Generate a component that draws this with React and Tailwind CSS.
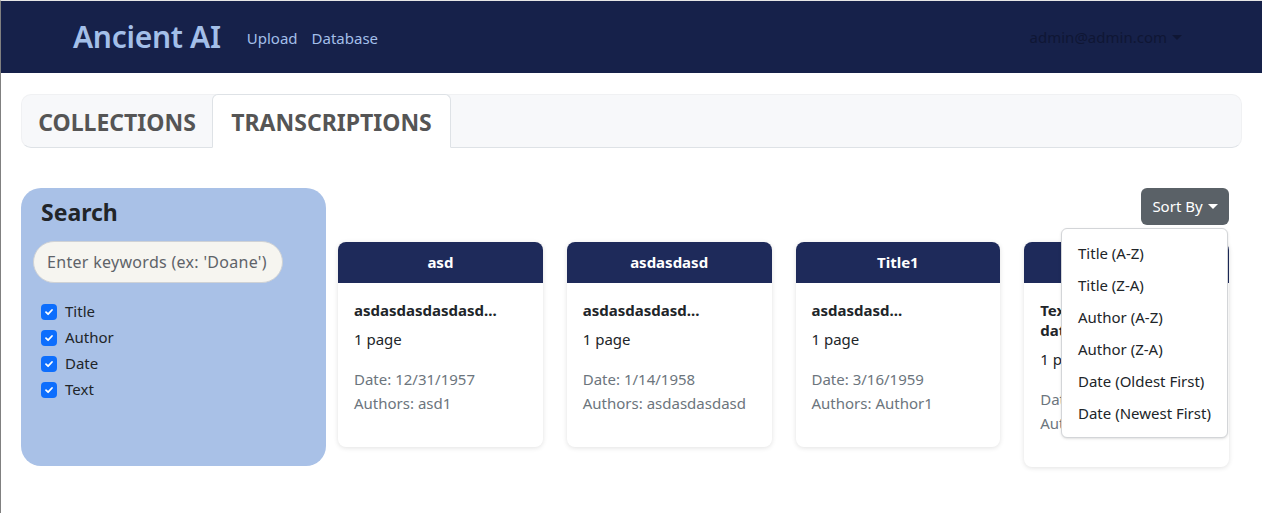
import React from "react";

const CARDS = [
  { head: "asd", title: "asdasdasdasdasd...", date: "12/31/1957", authors: "asd1" },
  { head: "asdasdasd", title: "asdasdasdasd...", date: "1/14/1958", authors: "asdasdasdasd" },
  { head: "Title1", title: "asdasdasd...", date: "3/16/1959", authors: "Author1" },
  { head: "Text", title: "Text transcription dataset...", date: "2/2/1960", authors: "Author2" },
];

const SORTS = [
  "Title (A-Z)",
  "Title (Z-A)",
  "Author (A-Z)",
  "Author (Z-A)",
  "Date (Oldest First)",
  "Date (Newest First)",
];

const Check = () => (
  <span className="w-4 h-4 rounded-[4px] bg-[#0d6efd] flex items-center justify-center">
    <svg width="10" height="10" viewBox="0 0 10 10" fill="none">
      <path d="M2 5.2 L4.1 7.2 L8 3" stroke="white" strokeWidth="1.8" strokeLinecap="round" strokeLinejoin="round" />
    </svg>
  </span>
);

const Caret = ({ color }) => (
  <span className={`inline-block ml-[5px] align-middle w-0 h-0 border-l-[5px] border-r-[5px] border-t-[5px] border-l-transparent border-r-transparent ${color}`} />
);

export default function App() {
  return (
    <div className="min-h-[513px] bg-white border-l border-[#808080] border-t border-t-[#e6e6e6] text-[#212529]" style={{ fontFamily: '"Noto Sans", "Open Sans", sans-serif' }}>
      {/* Navbar */}
      <nav className="h-[72px] bg-[#16214a] flex items-center pl-[72px] pr-[80px]">
        <span className="text-[30px] font-semibold text-[#a3bfe9] tracking-[-0.3px] leading-none">Ancient AI</span>
        <div className="flex gap-[14px] ml-[26px] mt-[2px] text-[15px] text-[#a3bfe9]">
          <span>Upload</span>
          <span>Database</span>
        </div>
        <div className="ml-auto mt-px text-[15px] text-[#0f1634] flex items-center">
          admin@admin.com
          <Caret color="border-t-[#0f1634]" />
        </div>
      </nav>

      <div className="px-[20px]">
        {/* Tabs */}
        <div className="mt-[21px] h-[54px] flex bg-[#f7f8fa] rounded-[10px] border border-[#f0f1f3] border-b-[#dee2e6]">
          <div className="w-[190px] pt-[2px] flex items-center justify-center text-[23px] font-bold text-[#555555]">COLLECTIONS</div>
          <div className="w-[239px] -mt-px pt-[2px] h-[54px] flex items-center justify-center text-[23px] font-bold text-[#555555] bg-white border border-[#dee2e6] border-b-white rounded-t-[6px]">
            TRANSCRIPTIONS
          </div>
        </div>

        {/* Content */}
        <div className="mt-[40px] flex items-start">
          <div className="w-[305px] h-[278px] bg-[#a9c1e7] rounded-[20px] shrink-0">
            <div className="pl-[20px] pt-[7px] text-[23px] font-bold text-[#212529]">Search</div>
            <div className="ml-[12px] mt-[11px] w-[250px] h-[42px] rounded-full bg-[#f6f5f0] border border-[#cfd2d6] flex items-center pl-[13px] text-[16px] tracking-[0.3px] text-[#5e6369] whitespace-nowrap overflow-hidden">
              Enter keywords (ex: 'Doane')
            </div>
            <div className="mt-[21px] pl-[20px] flex flex-col gap-[10px] text-[15px]">
              {["Title", "Author", "Date", "Text"].map((l) => (
                <div key={l} className="flex items-center gap-[8px] h-4">
                  <Check />
                  <span>{l}</span>
                </div>
              ))}
            </div>
          </div>

          <div className="ml-[12px] w-[891px] relative">
            <div className="flex justify-end">
              <button className="h-[37px] w-[88px] rounded-[6px] bg-[#5a6167] text-white text-[15px] flex items-center justify-center">
                Sort By
                <Caret color="border-t-white" />
              </button>
            </div>

            <div className="mt-[17px] flex gap-[24px] items-start">
              {CARDS.map((c) => (
                <div key={c.head} className="w-[205px] bg-white rounded-[8px] shadow-[0_1px_5px_rgba(0,0,0,0.12)] overflow-hidden">
                  <div className="h-[41px] bg-[#1e2a5a] text-white font-bold text-[15px] flex items-center justify-center">{c.head}</div>
                  <div className="px-[16px] pt-[17px] pb-[32px]">
                    <div className="text-[15px] font-bold leading-[20px]">{c.title}</div>
                    <div className="mt-[7px] text-[15px] leading-[24px]">1 page</div>
                    <div className="mt-[16px] text-[15px] leading-[24px] text-[#6c757d]">Date: {c.date}</div>
                    <div className="text-[15px] leading-[24px] text-[#6c757d]">Authors: {c.authors}</div>
                  </div>
                </div>
              ))}
            </div>

            {/* Sort dropdown */}
            <div className="absolute top-[40px] right-[1px] w-[167px] bg-white border border-[#d3d5d8] rounded-[6px] py-[8px] shadow-sm">
              {SORTS.map((s) => (
                <div key={s} className="h-[32px] flex items-center px-[16px] text-[15px] text-[#212529] whitespace-nowrap">{s}</div>
              ))}
            </div>
          </div>
        </div>
      </div>
    </div>
  );
}
